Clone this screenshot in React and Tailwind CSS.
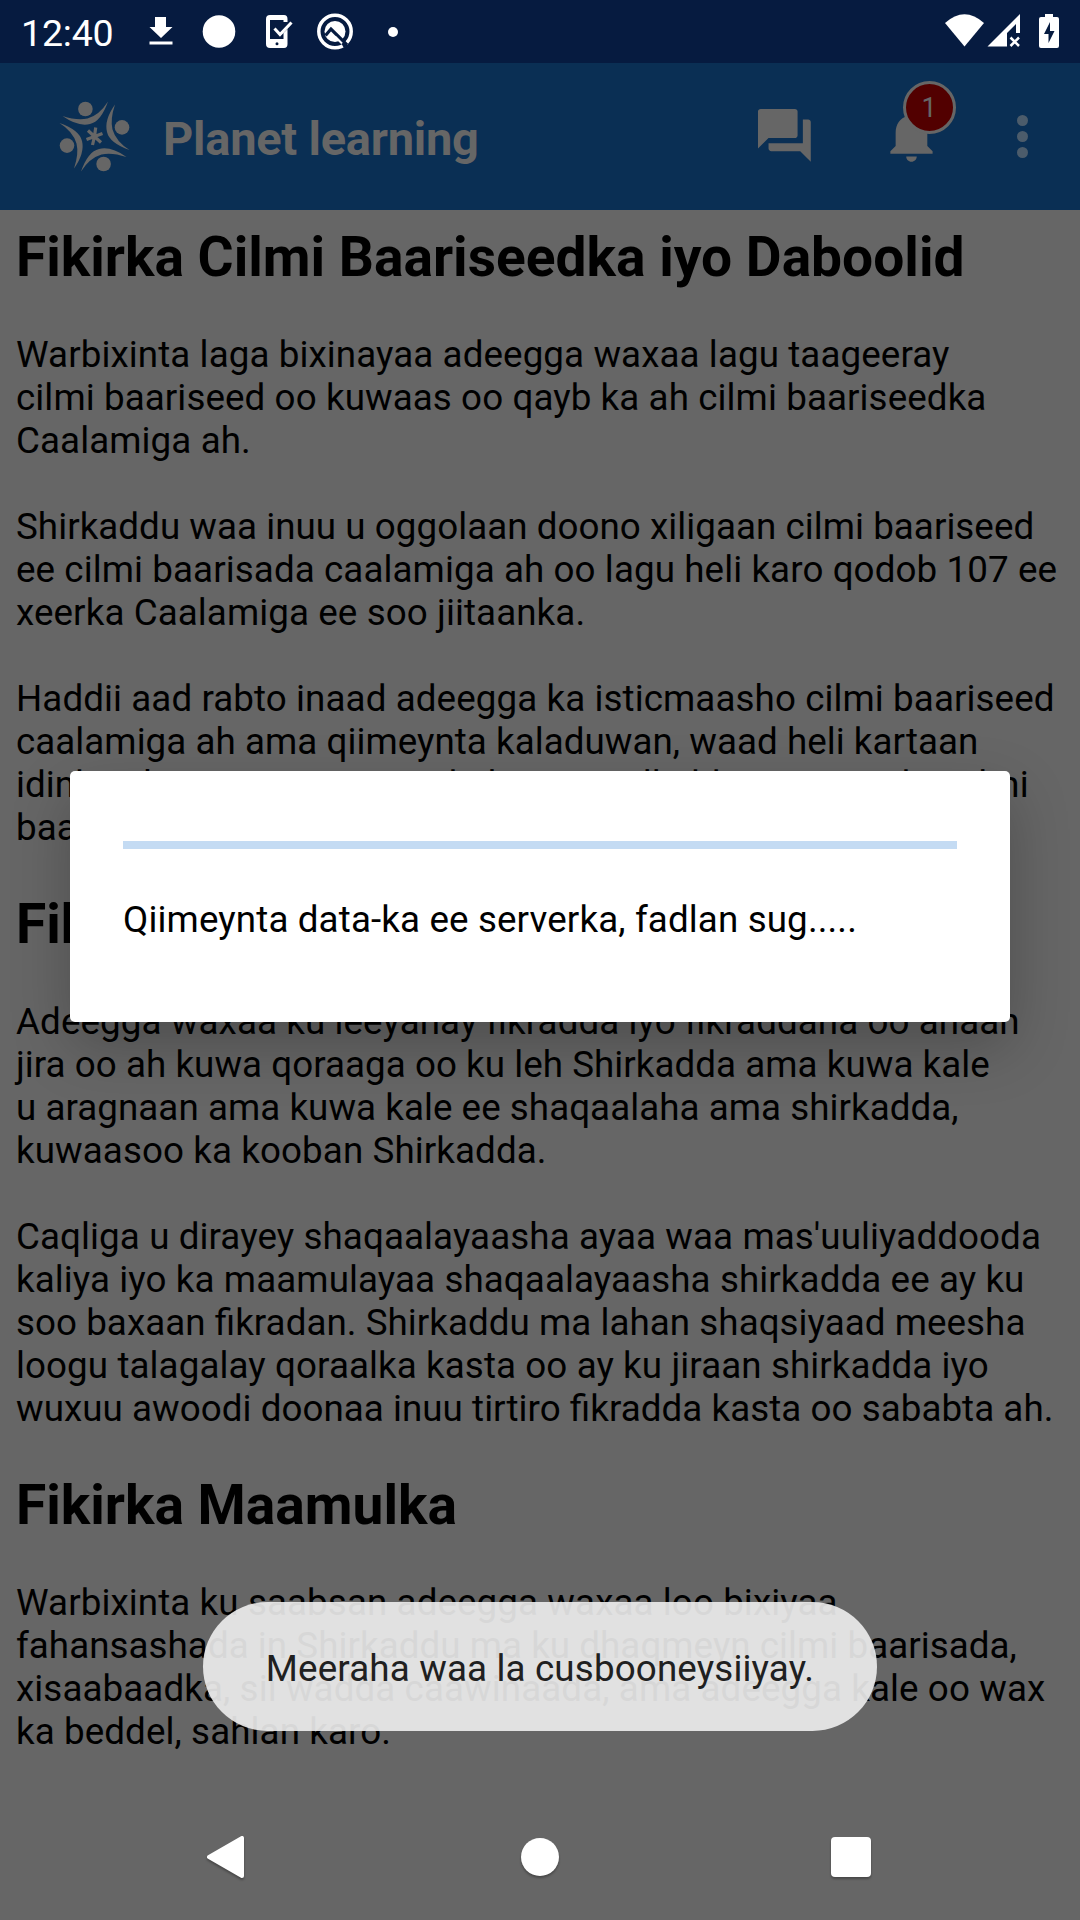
const sections = [
  { title: "Fikirka Cilmi Baariseedka iyo Daboolid", paragraphs: [
    ["Warbixinta laga bixinayaa adeegga waxaa lagu taageeray", "cilmi baariseed oo kuwaas oo qayb ka ah cilmi baariseedka", "Caalamiga ah."],
    ["~Shirkaddu waa inuu u oggolaan doono xiligaan cilmi baariseed", "ee cilmi baarisada caalamiga ah oo lagu heli karo qodob 107 ee", "xeerka Caalamiga ee soo jiitaanka."],
    ["Haddii aad rabto inaad adeegga ka isticmaasho cilmi baariseed", "~caalamiga ah ama qiimeynta kaladuwan, waad heli kartaan", "idinka ah goormeeyo ama kala wareejilliidda waxa iyo ku cilmi", "baariseedka."],
  ]},
  { title: "Fikirka Shaqaalaha", paragraphs: [
    ["Adeegga waxaa ku leeyahay fikradda iyo fikraddaha oo ahaan", "~jira oo ah kuwa qoraaga oo ku leh Shirkadda ama kuwa kale", "~u aragnaan ama kuwa kale ee shaqaalaha ama shirkadda,", "kuwaasoo ka kooban Shirkadda."],
    ["Caqliga u dirayey shaqaalayaasha ayaa waa mas'uuliyaddooda", "kaliya iyo ka maamulayaa shaqaalayaasha shirkadda ee ay ku", "~soo baxaan fikradan. Shirkaddu ma lahan shaqsiyaad meesha", "loogu talagalay qoraalka kasta oo ay ku jiraan shirkadda iyo", "~wuxuu awoodi doonaa inuu tirtiro fikradda kasta oo sababta ah."],
  ]},
  { title: "Fikirka Maamulka", paragraphs: [
    ["Warbixinta ku saabsan adeegga waxaa loo bixiyaa", "~fahansashada in Shirkaddu ma ku dhaqmeyn cilmi baarisada,", "xisaabaadka, sii wadda caawinaada, ama adeegga kale oo wax", "ka beddel, sahlan karo."],
  ]},
];

// A leading "~" marks a line set with slightly tighter tracking.
function Line({ text }) {
  const tight = text.startsWith("~");
  return <span className={tight ? "block tracking-[0.045px]" : "block tracking-[0.090px]"}>{tight ? text.slice(1) : text}</span>;
}

function StatusBar() {
  return (
    <div className="flex h-[63px] items-center bg-[#061b40] text-white">
      <span className="ml-[21px] w-[121px] pt-[3px] text-[37.500px] leading-[60px] tracking-[-0.2px]">12:40</span>
      <svg className="h-[63px] w-[246px] shrink-0" viewBox="142 0 246 63" fill="currentColor">
        <path d="M155 17h11v10h6.500l-11.500 11-11.500-11h5.500zM149.500 41.500h23v3h-23z" />
        <circle cx="219" cy="31.500" r="16.300" />
        <path fillRule="evenodd" d="M270 15h14q3.500 0 3.500 4v3h-4v-2H270v19h13.500V33l4-4v15q0 4-3.500 4h-14q-4 0-4-4V19q0-4 4-4zM277 42.200a1.500 1.500 0 1 0 0 3 1.500 1.500 0 0 0 0-3z" />
        <path d="m274.500 28.500 5.500 6 11.500-12" fill="none" stroke="#fff" strokeWidth="3" />
        <circle cx="335" cy="31.500" r="16.200" fill="none" stroke="#fff" strokeWidth="3.500" />
        <circle cx="335" cy="31.500" r="10.500" />
        <path d="M325.500 35.500l5.500-6.500 16 16" fill="none" stroke="#061b40" strokeWidth="3.200" />
        <path d="M342.500 45.500l3.500-2" stroke="#061b40" strokeWidth="5" />
        <path d="M335 36.500l7 7" stroke="#fff" strokeWidth="2" />
      </svg>
      <span className="h-2.5 w-2.5 rounded-full bg-white" />
      <svg className="ml-auto h-[63px] w-[140px]" viewBox="940 0 140 63" fill="currentColor">
        <path d="M945 23q19.500-17.500 39 0l-19.500 23.500z" />
        <path fillRule="evenodd" d="M987.500 46.500 1020 14v19h-4V24l-9 9v13.500z" />
        <path d="m1010.500 37.500 8.500 8.500m0-8.500-8.500 8.500" stroke="#fff" strokeWidth="2.500" />
        <path fillRule="evenodd" d="M1045 14h8v3h4q2 0 2 2v27q0 2-2 2h-16q-2 0-2-2V19q0-2 2-2h4zM1050 22l-6 12h4.500v9l6-12h-4.500z" />
      </svg>
    </div>
  );
}

function Figure({ angle }) {
  return (
    <g transform={`rotate(${angle} 94.500 136.500)`}>
      <circle cx="85.400" cy="109" r="7.300" />
      <path d="M62.500 116q15 5 25 2.500 12-3.500 20.500-17-7 20-18 22.500-12 3-27.500-8z" />
    </g>
  );
}

function Header() {
  return (
    <div className="flex h-[147px] items-center bg-[#0a2f54] text-[#666]">
      <svg className="h-[147px] w-[140px]" viewBox="0 63 140 147" fill="currentColor">
        <Figure angle={0} /><Figure angle={90} /><Figure angle={180} /><Figure angle={270} />
        <path d="m94.500 136.500 1.200-9m-1.200 9 8-3m-8 3 6.500 6m-6.500-6-2 8.500m2-8.500-8 3m8-3-6.500-6" stroke="currentColor" strokeWidth="3.200" />
      </svg>
      <h1 className="ml-[23px] pt-1 text-[47px] leading-[60px] font-bold tracking-[-0.25px] whitespace-nowrap">Planet learning</h1>
      <svg className="ml-auto h-[147px] w-[340px]" viewBox="740 63 340 147" fill="currentColor">
        <path transform="translate(752.700 103.700) scale(2.640)" d="M21 6h-2v9H6v2c0 .55.45 1 1 1h11l4 4V7c0-.55-.45-1-1-1zm-4 6V3c0-.55-.45-1-1-1H3c-.55 0-1 .45-1 1v14l4-4h10c.55 0 1-.45 1-1z" />
        <path transform="translate(879.800 103.700) scale(2.640)" d="M12 22c1.100 0 2-.9 2-2h-4c0 1.100.89 2 2 2zm6-6v-5c0-3.070-1.640-5.640-4.500-6.320V4c0-.83-.67-1.500-1.500-1.500s-1.500.67-1.500 1.500v.68C7.630 5.360 6 7.920 6 11v5l-2 2v1h16v-1l-2-2z" />
        <circle cx="929.500" cy="107.500" r="25" fill="#520000" stroke="#666" strokeWidth="3" />
        <text x="929" y="117" textAnchor="middle" fontSize="27">1</text>
        <g fill="#4c5c6b"><circle cx="1022.500" cy="120.500" r="5.500" /><circle cx="1022.500" cy="136.500" r="5.500" /><circle cx="1022.500" cy="152.500" r="5.500" /></g>
      </svg>
    </div>
  );
}

export default function App() {
  return (
    <div className="relative h-[1920px] w-[1080px] overflow-hidden bg-[#666] font-['Roboto',sans-serif] text-black">
      <StatusBar />
      <Header />
      <main className="px-4 pt-[15px] text-[36.75px] leading-[43px] [font-feature-settings:'liga'_1] whitespace-nowrap">
        {sections.map((s) => (
          <section key={s.title}>
            <h2 className="mb-[43px] text-[55.100px] leading-[65px] font-bold">{s.title}</h2>
            {s.paragraphs.map((p) => (
              <p key={p[0]} className="mb-[43px]">
                {p.map((line) => <Line key={line} text={line} />)}
              </p>
            ))}
          </section>
        ))}
      </main>
      <div className="absolute top-[771px] left-[70px] flex h-[251px] w-[940px] flex-col rounded-[5px] bg-white px-[53px] pt-[70px] shadow-[0_24px_60px_rgba(0,0,0,0.240)]">
        <div className="h-2 w-full bg-[#c4dbf3]" />
        <p className="mt-[49px] text-[36.75px] leading-[43px] tracking-[0.13px] whitespace-nowrap">Qiimeynta data-ka ee serverka, fadlan sug.....</p>
      </div>
      <div className="absolute top-[1602px] left-[203px] flex h-[129px] w-[674px] items-center justify-center rounded-[65px] bg-[#eeeeee]/90 pt-1 text-[36.75px] tracking-[0.15px] whitespace-nowrap text-[#202020]">
        Meeraha waa la cusbooneysiiyay.
      </div>
      <svg className="absolute bottom-0 left-0 h-[126px] w-[1080px] drop-shadow-[0_2px_1px_rgba(0,0,0,0.300)]" viewBox="0 1794 1080 126" fill="#fff">
        <path d="M209 1857l33-19v38z" stroke="#fff" strokeWidth="4" strokeLinejoin="round" />
        <circle cx="540" cy="1857" r="19" />
        <rect x="831" y="1837" width="40" height="40" rx="4" />
      </svg>
    </div>
  );
}
